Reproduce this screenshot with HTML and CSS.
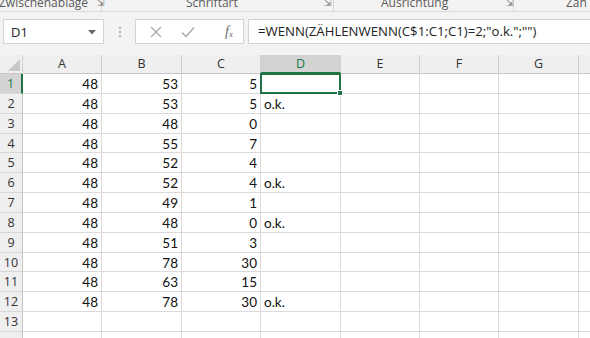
FILE: index.html
```html
<!DOCTYPE html>
<html lang="de">
<head>
<meta charset="utf-8">
<link rel="stylesheet" href="styles.css">
</head>
<body>
<div class="app">
  <div class="ribbon">
    <div class="group g1"><span class="gname">Zwischenablage</span><span class="launch">&#8690;</span></div>
    <div class="group g2"><span class="gname">Schriftart</span><span class="launch">&#8690;</span></div>
    <div class="group g3"><span class="gname">Ausrichtung</span><span class="launch">&#8690;</span></div>
    <div class="group g4"><span class="gname">Zah</span></div>
  </div>
  <div class="fbar">
    <div class="namebox"><span>D1</span><svg class="caret" width="8" height="5" viewBox="0 0 8 5"><path d="M0 0H8L4 4.5Z" fill="#6a6a6a"/></svg></div>
    <div class="grip"><i></i><i></i><i></i></div>
    <div class="fbtns">
      <svg width="14" height="14" viewBox="0 0 14 14"><path d="M2 2L12 12M12 2L2 12" stroke="#a6a6a6" stroke-width="1.3" fill="none"/></svg>
      <svg width="16" height="14" viewBox="0 0 16 14"><path d="M2 7.5L6 11.5L14 2.5" stroke="#a6a6a6" stroke-width="1.3" fill="none"/></svg>
      <span class="fx"><i>f</i><sub>x</sub></span>
    </div>
    <div class="formula">=WENN(ZÄHLENWENN(C$1:C1;C1)=2;"o.k.";"")</div>
  </div>
  <div class="sheet">
    <div class="corner"><svg width="12" height="12" viewBox="0 0 12 12"><path d="M12 0V12H0Z" fill="#c8c8c8"/></svg></div>
    <div class="ch">A</div><div class="ch">B</div><div class="ch">C</div><div class="ch sel">D</div><div class="ch">E</div><div class="ch">F</div><div class="ch">G</div><div class="ch last"></div>

    <div class="rh sel">1</div><div class="c n">48</div><div class="c n">53</div><div class="c n">5</div><div class="c active"><span class="selbox"><span class="handle"></span></span></div><div class="c"></div><div class="c"></div><div class="c"></div><div class="c"></div>
    <div class="rh">2</div><div class="c n">48</div><div class="c n">53</div><div class="c n">5</div><div class="c">o.k.</div><div class="c"></div><div class="c"></div><div class="c"></div><div class="c"></div>
    <div class="rh">3</div><div class="c n">48</div><div class="c n">48</div><div class="c n">0</div><div class="c"></div><div class="c"></div><div class="c"></div><div class="c"></div><div class="c"></div>
    <div class="rh">4</div><div class="c n">48</div><div class="c n">55</div><div class="c n">7</div><div class="c"></div><div class="c"></div><div class="c"></div><div class="c"></div><div class="c"></div>
    <div class="rh">5</div><div class="c n">48</div><div class="c n">52</div><div class="c n">4</div><div class="c"></div><div class="c"></div><div class="c"></div><div class="c"></div><div class="c"></div>
    <div class="rh">6</div><div class="c n">48</div><div class="c n">52</div><div class="c n">4</div><div class="c">o.k.</div><div class="c"></div><div class="c"></div><div class="c"></div><div class="c"></div>
    <div class="rh">7</div><div class="c n">48</div><div class="c n">49</div><div class="c n">1</div><div class="c"></div><div class="c"></div><div class="c"></div><div class="c"></div><div class="c"></div>
    <div class="rh">8</div><div class="c n">48</div><div class="c n">48</div><div class="c n">0</div><div class="c">o.k.</div><div class="c"></div><div class="c"></div><div class="c"></div><div class="c"></div>
    <div class="rh">9</div><div class="c n">48</div><div class="c n">51</div><div class="c n">3</div><div class="c"></div><div class="c"></div><div class="c"></div><div class="c"></div><div class="c"></div>
    <div class="rh">10</div><div class="c n">48</div><div class="c n">78</div><div class="c n">30</div><div class="c"></div><div class="c"></div><div class="c"></div><div class="c"></div><div class="c"></div>
    <div class="rh">11</div><div class="c n">48</div><div class="c n">63</div><div class="c n">15</div><div class="c"></div><div class="c"></div><div class="c"></div><div class="c"></div><div class="c"></div>
    <div class="rh">12</div><div class="c n">48</div><div class="c n">78</div><div class="c n">30</div><div class="c">o.k.</div><div class="c"></div><div class="c"></div><div class="c"></div><div class="c"></div>
    <div class="rh">13</div><div class="c"></div><div class="c"></div><div class="c"></div><div class="c"></div><div class="c"></div><div class="c"></div><div class="c"></div><div class="c"></div>
    <div class="rh"></div><div class="c"></div><div class="c"></div><div class="c"></div><div class="c"></div><div class="c"></div><div class="c"></div><div class="c"></div><div class="c"></div>
  </div>
</div>
</body>
</html>
```
FILE: styles.css
```css
* { box-sizing: border-box; }
html, body { margin: 0; padding: 0; }
body {
  width: 590px;
  height: 338px;
  overflow: hidden;
  background: #ffffff;
  font-family: "Open Sans", "Noto Sans", sans-serif;
  color: #222;
}
.app { display: flex; flex-direction: column; height: 338px; }
.app > * { flex-shrink: 0; }

.ribbon {
  height: 12px;
  background: #f3f3f3;
  border-bottom: 1px solid #d8d8d8;
  display: flex;
  overflow: hidden;
  font-size: 12px;
  color: #5a5a5a;
}
.group {
  display: flex;
  align-items: flex-start;
  margin-top: -5px;
  line-height: 16px;
  height: 17px;
}
.g1 { width: 102px; border-right: 1px solid #d8d8d8; }
.g1 .gname { margin-left: -1px; }
.g1 .launch { margin-left: 9px; }
.g2 { width: 232px; border-right: 1px solid #d8d8d8; }
.g2 .gname { margin-left: 84px; }
.g2 .launch { margin-left: 86px; }
.g3 { width: 180px; border-right: 1px solid #d8d8d8; }
.g3 .gname { margin-left: 47px; }
.g3 .launch { margin-left: 58px; }
.g4 .gname { margin-left: 52px; }
.launch { font-size: 9px; color: #777; }

.fbar {
  height: 43px;
  background: #f3f3f3;
  display: flex;
  align-items: flex-start;
  padding-top: 7px;
  padding-left: 3px;
}
.namebox {
  width: 101px;
  height: 25px;
  background: #fff;
  border: 1px solid #d4d4d4;
  display: flex;
  align-items: center;
  justify-content: space-between;
  padding: 0 7px 0 7px;
  font-size: 13px;
  color: #222;
}
.caret { margin-top: 1px; }
.grip {
  width: 31px;
  height: 25px;
  display: flex;
  flex-direction: column;
  align-items: center;
  justify-content: center;
  gap: 2px;
}
.grip i { width: 2px; height: 2px; background: #b4b4b4; display: block; }
.fbtns {
  width: 109px;
  height: 25px;
  background: #fff;
  border: 1px solid #d4d4d4;
  display: flex;
  align-items: center;
  padding-left: 13px;
  gap: 17px;
}
.fx {
  font-family: "Liberation Serif", serif;
  font-size: 14px;
  color: #6a6a6a;
  margin-left: 12px;
}
.fx i { font-style: italic; }
.fx sub { font-size: 9px; font-style: italic; vertical-align: -1px; }
.formula {
  flex: 1;
  margin-left: 4px;
  height: 25px;
  background: #fff;
  border: 1px solid #d4d4d4;
  border-right: none;
  font-size: 13.2px;
  line-height: 23px;
  padding-left: 9px;
  color: #222;
  white-space: nowrap;
}

.sheet {
  display: grid;
  grid-template-columns: 23px 79px 80px 79px 80px 79px 79px 80px 11px;
  grid-template-rows: 19px;
  grid-auto-rows: 19.85px;
  font-family: "Lato", "Open Sans", sans-serif;
}
.corner {
  background: #efefef;
  border-right: 1px solid #d0d0d0;
  border-bottom: 1px solid #c6c6c6;
  display: flex;
  align-items: flex-end;
  justify-content: flex-end;
  padding: 0 2px 2px 0;
}
.ch {
  background: #efefef;
  border-right: 1px solid #d0d0d0;
  border-bottom: 1px solid #c6c6c6;
  text-align: center;
  font-family: "Open Sans", sans-serif;
  font-size: 12.5px;
  line-height: 18px;
  color: #333;
}
.ch.sel {
  background: #d3d3d3;
  color: #217346;
  border-bottom: 2px solid #217346;
}
.ch.last { border-right: none; }
.rh {
  background: #efefef;
  border-right: 1px solid #c6c6c6;
  border-bottom: 1px solid #d6d6d6;
  text-align: center;
  font-family: "Open Sans", sans-serif;
  font-size: 12.5px;
  line-height: 19px;
  color: #333;
}
.rh.sel {
  background: #d3d3d3;
  color: #217346;
  border-right: 2px solid #217346;
}
.c {
  border-right: 1px solid #dadada;
  border-bottom: 1px solid #dadada;
  font-size: 13.5px;
  line-height: 20px;
  padding: 0 3px;
  color: #111;
  white-space: nowrap;
}
.c.n { text-align: right; }
.c:nth-child(9n+9) { border-right: none; }
.active { position: relative; }
.selbox {
  position: absolute;
  left: -1px;
  top: -1px;
  right: -1px;
  bottom: -1px;
  border: 2px solid #217346;
}
.handle {
  position: absolute;
  right: -4px;
  bottom: -4px;
  width: 6px;
  height: 6px;
  background: #217346;
  border: 1px solid #fff;
}
```
